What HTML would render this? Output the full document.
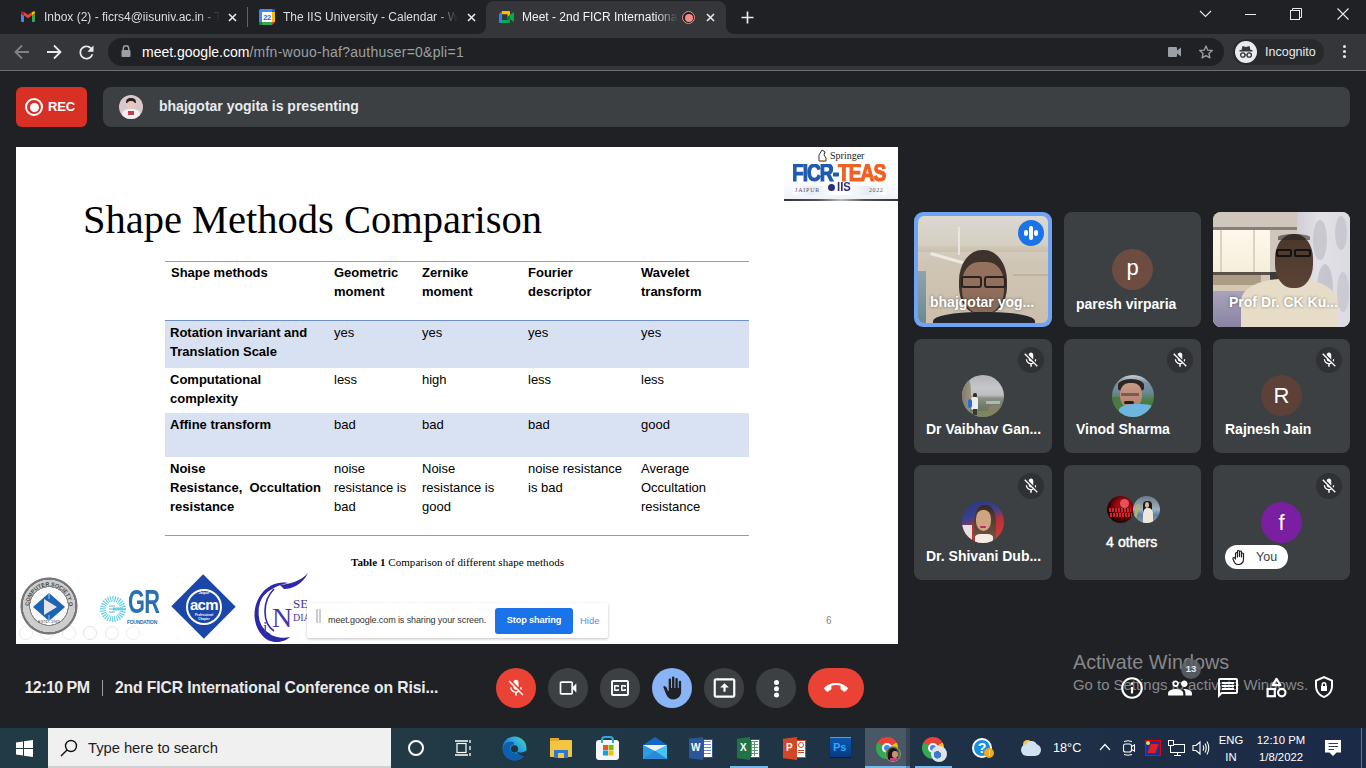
<!DOCTYPE html>
<html><head><meta charset="utf-8">
<style>
*{box-sizing:border-box;margin:0;padding:0}
html,body{width:1366px;height:768px;overflow:hidden;background:#202124;font-family:"Liberation Sans",sans-serif}
.a{position:absolute}
svg{display:block}
.tt{position:absolute;white-space:nowrap;overflow:hidden;font-size:12px;line-height:14px}
.fade{-webkit-mask-image:linear-gradient(to right,#000 0,#000 calc(100% - 22px),transparent 100%);mask-image:linear-gradient(to right,#000 0,#000 calc(100% - 22px),transparent 100%)}
.sl{position:absolute;white-space:nowrap;font-size:13px;line-height:19px;color:#000}
.slb{font-weight:bold}
.tile{position:absolute;background:#3c4043;border-radius:8px;overflow:hidden}
.nm{position:absolute;white-space:nowrap;color:#fff;font-weight:bold;font-size:14px;line-height:16px}
.mute{position:absolute;width:26px;height:26px;border-radius:13px;background:#2f3134}
.av{position:absolute;border-radius:50%;overflow:hidden}
.btn{position:absolute;top:668px;width:40px;height:40px;border-radius:20px;background:#3c4043}
.tb{position:absolute;top:736px}
</style></head><body>
<!-- ============ TAB STRIP ============ -->
<div class="a" style="left:0;top:0;width:1366px;height:34px;background:#202124"></div>

<!-- tab 1 gmail -->
<svg class="a" style="left:20px;top:11px" width="16" height="11" viewBox="0 0 16 12" preserveAspectRatio="none">
<path d="M1 3 L1 11 Q1 12 2 12 L4 12 L4 5 Z" fill="#4285f4"/>
<path d="M12 5 L12 12 L14 12 Q15 12 15 11 L15 3 Z" fill="#34a853"/>
<path d="M12 1 L12 5 L15 2.5 L15 1.5 Q15 0 13.5 0.5 Z" fill="#fbbc04"/>
<path d="M4 5 L4 1 L8 4 L12 1 L12 5 L8 8 Z" fill="#ea4335"/>
<path d="M1 2.5 L1 1.5 Q1 0 2.5 0.5 L4 1 L4 5 Z" fill="#c5221f"/>
</svg>
<div class="tt fade" style="left:44px;top:10px;width:176px;color:#dadce0">Inbox (2) - ficrs4@iisuniv.ac.in - The IIS</div>
<svg class="a" style="left:228px;top:13px" width="9" height="9" viewBox="0 0 9 9"><path d="M1 1L8 8M8 1L1 8" stroke="#e8eaed" stroke-width="1.6"/></svg>
<div class="a" style="left:247px;top:7px;width:1px;height:20px;background:#5f6368"></div>

<!-- tab 2 calendar -->
<svg class="a" style="left:259px;top:9px" width="16" height="16" viewBox="0 0 16 16">
<path d="M0 13V1.5Q0 0 1.5 0H14.5Q16 0 16 1.5V3H3V13Z" fill="#4285f4"/>
<path d="M13 0H14.5Q16 0 16 1.5V3H13Z" fill="#1967d2"/>
<rect x="13" y="3" width="3" height="10" fill="#fbbc04"/>
<path d="M0 13H13V16H1.5Q0 16 0 14.5Z" fill="#34a853"/>
<path d="M0 13H3V16H1.5Q0 16 0 14.5Z" fill="#188038"/>
<path d="M13 13H16L13 16Z" fill="#ea4335"/>
<rect x="3" y="3" width="10" height="10" fill="#fff"/>
<text x="8" y="11" font-size="7.5" font-weight="bold" text-anchor="middle" fill="#1a66d6" font-family="Liberation Sans" letter-spacing="-0.5">22</text>
</svg>
<div class="tt fade" style="left:283px;top:10px;width:175px;color:#dadce0">The IIS University - Calendar - Week</div>
<svg class="a" style="left:467px;top:13px" width="9" height="9" viewBox="0 0 9 9"><path d="M1 1L8 8M8 1L1 8" stroke="#e8eaed" stroke-width="1.6"/></svg>

<!-- active tab -->
<div class="a" style="left:486px;top:1px;width:240px;height:33px;background:#35363a;border-radius:8px 8px 0 0"></div>
<svg class="a" style="left:478px;top:26px" width="8" height="8" viewBox="0 0 8 8"><path d="M8 0 A8 8 0 0 1 0 8 H8 Z" fill="#35363a"/></svg>
<svg class="a" style="left:726px;top:26px" width="8" height="8" viewBox="0 0 8 8"><path d="M0 0 A8 8 0 0 0 8 8 H0 Z" fill="#35363a"/></svg>
<svg class="a" style="left:499px;top:11px" width="15" height="12" viewBox="0 0 15 12">
<path d="M0 3L3 0V3Z" fill="#ea4335"/>
<path d="M3 0H10.5Q11 0 11 0.5V3.8L8.6 6.2V3.3H3Z" fill="#fbbc04"/>
<path d="M0 3H3V12H1Q0 12 0 11Z" fill="#2684fc"/>
<path d="M3 9H8.6V6.2L11 3.8V11.5Q11 12 10.5 12H3Z" fill="#00ac47"/>
<path d="M8.6 6.2L11 3.8V8.4L8.6 9Z" fill="#00832d"/>
<path d="M11 3.8L15 1V11L11 8.2Z" fill="#00ac47"/>
</svg>
<div class="tt fade" style="left:522px;top:10px;width:156px;color:#f1f3f4">Meet - 2nd FICR International Conference</div>
<div class="a" style="left:682px;top:11px;width:13px;height:13px;border-radius:50%;border:1.5px solid #f28b82;background:#202124"></div>
<div class="a" style="left:684.5px;top:13.5px;width:8px;height:8px;border-radius:50%;background:#f28b82"></div>
<svg class="a" style="left:706px;top:13px" width="9" height="9" viewBox="0 0 9 9"><path d="M1 1L8 8M8 1L1 8" stroke="#e8eaed" stroke-width="1.6"/></svg>
<svg class="a" style="left:741px;top:11px" width="13" height="13" viewBox="0 0 13 13"><path d="M6.5 0.5V12.5M0.5 6.5H12.5" stroke="#e8eaed" stroke-width="1.7"/></svg>

<!-- window controls -->
<svg class="a" style="left:1199px;top:10px" width="13" height="8" viewBox="0 0 13 8"><path d="M1 1L6.5 6.5L12 1" stroke="#e8eaed" stroke-width="1.1" fill="none"/></svg>
<div class="a" style="left:1245px;top:14px;width:11px;height:1px;background:#e8eaed"></div>
<svg class="a" style="left:1290px;top:8px" width="12" height="12" viewBox="0 0 12 12"><rect x="0.5" y="2.5" width="9" height="9" stroke="#e8eaed" fill="none"/><path d="M2.5 2.5V0.5H11.5V9.5H9.5" stroke="#e8eaed" fill="none"/></svg>
<svg class="a" style="left:1337px;top:8px" width="12" height="12" viewBox="0 0 12 12"><path d="M0.5 0.5L11.5 11.5M11.5 0.5L0.5 11.5" stroke="#e8eaed" stroke-width="1.1"/></svg>

<!-- ============ TOOLBAR ============ -->
<div class="a" style="left:0;top:34px;width:1366px;height:36px;background:#35363a"></div>
<div class="a" style="left:0;top:70px;width:1366px;height:1px;background:#6b6e72"></div>
<svg class="a" style="left:14px;top:44px" width="16" height="16" viewBox="0 0 16 16"><path d="M15 8H2M8 1.5L1.5 8L8 14.5" stroke="#7f8185" stroke-width="1.8" fill="none"/></svg>
<svg class="a" style="left:46px;top:44px" width="16" height="16" viewBox="0 0 16 16"><path d="M1 8H14M8 1.5L14.5 8L8 14.5" stroke="#e8eaed" stroke-width="1.8" fill="none"/></svg>
<svg class="a" style="left:75.5px;top:41.5px" width="21" height="21" viewBox="0 0 24 24"><path d="M17.65 6.35C16.2 4.9 14.21 4 12 4c-4.42 0-7.99 3.58-7.99 8s3.57 8 7.99 8c3.73 0 6.84-2.55 7.73-6h-2.08c-.82 2.33-3.04 4-5.65 4-3.31 0-6-2.69-6-6s2.69-6 6-6c1.66 0 3.14.69 4.22 1.78L13 11h7V4l-2.35 2.35z" fill="#e8eaed"/></svg>
<div class="a" style="left:108px;top:38px;width:1116px;height:28px;border-radius:14px;background:#202124"></div>
<svg class="a" style="left:121px;top:45px" width="10" height="12" viewBox="0 0 10 12"><path d="M2.3 5V3.5A2.7 2.7 0 0 1 7.7 3.5V5" stroke="#9aa0a6" stroke-width="1.4" fill="none"/><rect x="0.5" y="5" width="9" height="7" rx="1" fill="#9aa0a6"/></svg>
<div class="a" style="left:142px;top:44px;font-size:14px;line-height:16px;white-space:nowrap;color:#fff">meet.google.com<span style="color:#9aa0a6;letter-spacing:0.25px">/mfn-wouo-haf?authuser=0&amp;pli=1</span></div>
<svg class="a" style="left:1168px;top:47px" width="13" height="10" viewBox="0 0 13 10"><rect x="0" y="0" width="9" height="10" rx="1" fill="#9aa0a6"/><path d="M9 3.5L13 0.5V9.5L9 6.5Z" fill="#9aa0a6"/></svg>
<svg class="a" style="left:1199px;top:45px" width="14" height="14" viewBox="0 0 14 14"><path d="M7 1L8.8 5.2L13.3 5.5L9.9 8.5L10.9 12.9L7 10.6L3.1 12.9L4.1 8.5L0.7 5.5L5.2 5.2Z" stroke="#9aa0a6" stroke-width="1.3" fill="none" stroke-linejoin="round"/></svg>
<div class="a" style="left:1233px;top:39px;width:91px;height:26px;border-radius:13px;background:#28292c"></div>
<div class="a" style="left:1235px;top:41px;width:22px;height:22px;border-radius:50%;background:#e8eaed"></div>
<svg class="a" style="left:1238px;top:45px" width="16" height="14" viewBox="0 0 16 14"><path d="M4.5 1L3.5 5H12.5L11.5 1L8 2Z" fill="#35363a"/><rect x="1.5" y="5" width="13" height="1.5" fill="#35363a"/><circle cx="4.8" cy="10" r="2.2" stroke="#35363a" stroke-width="1.3" fill="none"/><circle cx="11.2" cy="10" r="2.2" stroke="#35363a" stroke-width="1.3" fill="none"/><path d="M7 10H9" stroke="#35363a" stroke-width="1.2"/></svg>
<div class="a" style="left:1265px;top:45px;font-size:12.5px;line-height:14px;color:#e8eaed;white-space:nowrap">Incognito</div>
<div class="a" style="left:1343px;top:45px;width:3px;height:3px;border-radius:50%;background:#e8eaed;box-shadow:0 5px 0 #e8eaed,0 10px 0 #e8eaed"></div>

<!-- ============ MEET TOP ============ -->
<div class="a" style="left:16px;top:87px;width:71px;height:40px;border-radius:6px;background:#d93025"></div>
<div class="a" style="left:25px;top:98px;width:18px;height:18px;border-radius:50%;border:2px solid #fff"></div>
<div class="a" style="left:29.5px;top:102.5px;width:9px;height:9px;border-radius:50%;background:#fff"></div>
<div class="a" style="left:48px;top:99px;font-size:13px;line-height:15px;font-weight:bold;color:#fff;letter-spacing:-0.1px">REC</div>
<div class="a" style="left:103px;top:87px;width:1247px;height:40px;border-radius:8px;background:#3c4043"></div>
<div class="av" style="left:119px;top:95px;width:24px;height:24px;background:#d8c8cc">
 <div class="a" style="left:7px;top:3px;width:10px;height:5px;border-radius:5px 5px 1px 1px;background:#2a2022"></div>
 <div class="a" style="left:8px;top:6px;width:8px;height:8px;border-radius:45%;background:#e6c8bc"></div>
 <div class="a" style="left:3px;top:14px;width:18px;height:12px;border-radius:40% 40% 0 0;background:#f2eef2"></div>
 <div class="a" style="left:9px;top:16px;width:6px;height:4px;background:#c04050"></div>
</div>
<div class="a" style="left:159px;top:98px;font-size:14px;line-height:16px;font-weight:bold;color:#e8eaed;white-space:nowrap">bhajgotar yogita is presenting</div>

<!-- SLIDE -->
<div class="a" style="left:16px;top:147px;width:882px;height:497px;background:#fff;overflow:hidden">
 <div class="a" style="left:67px;top:50px;font-family:'Liberation Serif',serif;font-size:40.5px;line-height:46px;color:#000;white-space:nowrap">Shape Methods Comparison</div>
 <!-- FICR logo -->
 <div class="a" style="left:768px;top:0;width:114px;height:53px;background:linear-gradient(#fff 0,#fff 60%,#eef1f7 100%)"></div>
 <div class="a" style="left:768px;top:52px;width:114px;height:2px;background:linear-gradient(to right,#333 0,#555 30%,#bbb 50%,#555 70%,#333 100%)"></div>
 <svg class="a" style="left:801px;top:2px" width="10" height="13" viewBox="0 0 10 13"><path d="M2 12V6L5 1L8 3L7 6L9 9V12Z" stroke="#333" stroke-width="1" fill="none"/><rect x="2" y="11.5" width="7" height="1.2" fill="#e08030"/></svg>
 <div class="a" style="left:814px;top:3px;font-family:'Liberation Serif',serif;font-size:10px;line-height:12px;color:#222">Springer</div>
 <div class="a" style="left:777px;top:17px;width:94px;height:20px;overflow:hidden">
  <div style="position:absolute;left:-1px;top:-3px;font-weight:bold;font-size:22px;line-height:22px;letter-spacing:-1.2px;transform:scale(0.875,1.12);transform-origin:0 0;white-space:nowrap;font-family:'Liberation Sans',sans-serif;-webkit-text-stroke:1.1px"><span style="color:#1f5aae;-webkit-text-stroke-color:#1f5aae">FICR-</span><span style="color:#ee6226;-webkit-text-stroke-color:#ee6226">TEAS</span></div>
 </div>
 <div class="a" style="left:777px;top:39px;width:93px;height:9px;background:linear-gradient(to right,#fff,#e6ebf5 20%,#fff 45%,#fff 55%,#e6ebf5 80%,#fff)"></div>
 <div class="a" style="left:779px;top:39px;font-family:'Liberation Serif',serif;font-size:6px;line-height:8px;color:#556;letter-spacing:0.8px">JAIPUR</div>
 <div class="a" style="left:853px;top:39px;font-family:'Liberation Serif',serif;font-size:6px;line-height:8px;color:#556;letter-spacing:0.6px">2022</div>
 <div class="a" style="left:812px;top:37px;width:7px;height:7px;border-radius:50%;background:#2d2d7a"></div>
 <div class="a" style="left:821px;top:34px;font-weight:bold;font-size:12.5px;line-height:13px;color:#2d2d7a;transform:scaleX(0.9);transform-origin:0 0">IIS</div>

 <!-- table -->
 <div class="a" style="left:149px;top:114px;width:584px;height:1px;background:#7f9dd6"></div>
 <div class="a" style="left:149px;top:173px;width:584px;height:1px;background:#6d8fd0"></div>
 <div class="a" style="left:149px;top:174px;width:584px;height:47px;background:#d7e1f1"></div>
 <div class="a" style="left:149px;top:266px;width:584px;height:44px;background:#d9e2f2"></div>
 <div class="a" style="left:149px;top:388px;width:584px;height:1px;background:#7f9dd6"></div>

 <div class="sl slb" style="left:155px;top:116px">Shape methods</div>
 <div class="sl slb" style="left:318px;top:116px">Geometric<br>moment</div>
 <div class="sl slb" style="left:406px;top:116px">Zernike<br>moment</div>
 <div class="sl slb" style="left:512px;top:116px">Fourier<br>descriptor</div>
 <div class="sl slb" style="left:625px;top:116px">Wavelet<br>transform</div>

 <div class="sl slb" style="left:154px;top:176px">Rotation invariant and<br>Translation Scale</div>
 <div class="sl" style="left:318px;top:176px">yes</div>
 <div class="sl" style="left:406px;top:176px">yes</div>
 <div class="sl" style="left:512px;top:176px">yes</div>
 <div class="sl" style="left:625px;top:176px">yes</div>

 <div class="sl slb" style="left:154px;top:223px">Computational<br>complexity</div>
 <div class="sl" style="left:318px;top:223px">less</div>
 <div class="sl" style="left:406px;top:223px">high</div>
 <div class="sl" style="left:512px;top:223px">less</div>
 <div class="sl" style="left:625px;top:223px">less</div>

 <div class="sl slb" style="left:154px;top:268px">Affine transform</div>
 <div class="sl" style="left:318px;top:268px">bad</div>
 <div class="sl" style="left:406px;top:268px">bad</div>
 <div class="sl" style="left:512px;top:268px">bad</div>
 <div class="sl" style="left:625px;top:268px">good</div>

 <div class="sl slb" style="left:154px;top:312px">Noise<br>Resistance,&nbsp; Occultation<br>resistance</div>
 <div class="sl" style="left:318px;top:312px">noise<br>resistance is<br>bad</div>
 <div class="sl" style="left:406px;top:312px">Noise<br>resistance is<br>good</div>
 <div class="sl" style="left:512px;top:312px">noise resistance<br>is bad</div>
 <div class="sl" style="left:625px;top:312px">Average<br>Occultation<br>resistance</div>

 <div class="a" style="left:335px;top:409px;font-family:'Liberation Serif',serif;font-size:11px;line-height:12px;color:#000;white-space:nowrap;letter-spacing:0.05px"><b>Table 1</b> Comparison of different shape methods</div>
 <div class="a" style="left:810px;top:468px;font-size:10px;line-height:12px;color:#888">6</div>

 <!-- logos -->
 <!-- faint toolbar icons -->
 <div class="a" style="left:3px;top:479px;width:14px;height:14px;border-radius:50%;border:1px solid #eaeaea"></div>
 <div class="a" style="left:24px;top:479px;width:14px;height:14px;border-radius:50%;border:1px solid #eaeaea"></div>
 <div class="a" style="left:46px;top:479px;width:14px;height:14px;border-radius:50%;border:1px solid #eaeaea"></div>
 <div class="a" style="left:67px;top:479px;width:14px;height:14px;border-radius:50%;border:1px solid #e4e4e4"></div>
 <div class="a" style="left:89px;top:479px;width:14px;height:14px;border-radius:50%;border:1px solid #e8e8e8"></div>
 <div class="a" style="left:110px;top:479px;width:14px;height:14px;border-radius:50%;border:1px solid #eeeeee"></div>

 <!-- CSI -->
 <div class="a" style="left:4px;top:430px;width:58px;height:58px;border-radius:50%;background:radial-gradient(circle closest-side,#fafafa 0 64%,#8a8a8a 65% 68%,#cdcdcd 69% 90%,#777 91% 97%,rgba(255,255,255,0) 100%)"></div>
 <svg class="a" style="left:4px;top:430px" width="58" height="58" viewBox="0 0 58 58"><path id="arc1" d="M9 29 A20 20 0 0 1 49 29" fill="none"/><text font-family="Liberation Sans" font-size="5.5" font-weight="bold" fill="#444"><textPath href="#arc1">COMPUTER SOCIETY OF INDIA</textPath></text><text x="29" y="46" font-family="Liberation Sans" font-size="4" fill="#444" text-anchor="middle">ESTD. 1965</text></svg>
 <svg class="a" style="left:17px;top:446px" width="32" height="28" viewBox="0 0 32 28"><path d="M16 0L32 14L16 28L0 14Z" fill="#1d63b3"/><path d="M11 6L24 14L11 22Z" fill="#e4e4e4"/><path d="M16 0V6M16 22V28" stroke="#cfe0f5" stroke-width="0.8"/></svg>
 <!-- GR -->
 <svg class="a" style="left:84px;top:441px" width="26" height="42" viewBox="0 0 26 42"><circle cx="13" cy="21" r="10" stroke="#6fd0e2" stroke-width="6" stroke-dasharray="1.2 1" fill="none"/><path d="M23 21H13" stroke="#6fd0e2" stroke-width="3"/><path d="M9 18H15M9 21H15M9 24H15" stroke="#5fb8d8" stroke-width="1"/></svg>
 <div class="a" style="left:112px;top:438px;font-weight:bold;font-size:33px;line-height:34px;color:#2a70b4;letter-spacing:-1px;transform:scaleX(0.66);transform-origin:0 0">GR</div>
 <div class="a" style="left:111px;top:472px;font-size:5px;line-height:6px;color:#2a70b4;letter-spacing:-0.3px;font-weight:bold">FOUNDATION</div>
 <!-- ACM -->
 <div class="a" style="left:164px;top:437px;width:47px;height:45px;background:#1b48a8;transform:rotate(45deg) scale(0.98,1)"></div>
 <div class="a" style="left:170px;top:442px;width:36px;height:36px;border-radius:50%;border:2px solid #fff"></div>
 <div class="a" style="left:171px;top:449px;width:34px;text-align:center;font-weight:bold;font-size:15px;line-height:17px;color:#fff;letter-spacing:-0.6px">acm</div>
 <div class="a" style="left:171px;top:444px;width:34px;text-align:center;font-weight:bold;font-size:3.5px;line-height:4px;color:#fff">Jaipur</div>
 <div class="a" style="left:171px;top:466px;width:34px;text-align:center;font-weight:bold;font-size:3px;line-height:4px;color:#fff">Professional<br>Chapter</div>
 <!-- inseed -->
 <svg class="a" style="left:230px;top:426px" width="80" height="72" viewBox="0 0 80 72"><path d="M26 12 C6 22 2 52 20 66 C30 72 40 68 44 64 C28 68 10 56 11 38 C12 24 24 14 42 10 C36 9 31 10 26 12Z" fill="#2c2aa8"/><path d="M20 18 C8 30 8 54 24 62" stroke="#2c2aa8" stroke-width="2.2" fill="none"/><path d="M28 16 C16 28 16 50 28 58" stroke="#2c2aa8" stroke-width="1.6" fill="none"/><path d="M34 12 C50 10 56 6 62 0 C56 12 46 16 38 16Z" fill="#2c2aa8"/><text x="26" y="54" font-family="Liberation Serif" font-size="28" fill="#4838a4">N</text><text x="17" y="60" font-family="Liberation Serif" font-size="16" fill="#4838a4">i</text><text x="47" y="35" font-family="Liberation Serif" font-size="13" fill="#4838a4">SE</text><text x="47" y="48" font-family="Liberation Serif" font-size="10" fill="#4838a4">DIA</text></svg>
 <!-- sharing bar -->
 <div class="a" style="left:291px;top:456px;width:301px;height:35px;background:#fff;box-shadow:0 1px 3px rgba(0,0,0,0.25);border-radius:2px"></div>
 <div class="a" style="left:300px;top:462px;width:1.5px;height:14px;background:#ccc;box-shadow:3px 0 0 #ccc"></div>
 <div class="a" style="left:312px;top:468px;font-size:9px;line-height:11px;color:#333;white-space:nowrap;letter-spacing:-0.1px">meet.google.com is sharing your screen.</div>
 <div class="a" style="left:479px;top:461px;width:78px;height:26px;border-radius:3px;background:#1a73e8"></div>
 <div class="a" style="left:479px;top:468px;width:78px;text-align:center;font-size:9.2px;line-height:11px;color:#fff;font-weight:bold;letter-spacing:-0.15px">Stop sharing</div>
 <div class="a" style="left:564px;top:468px;font-size:9.5px;line-height:11px;color:#5b8de0">Hide</div>
</div>

<!-- TILES -->
<!-- tile 1: bhajgotar (video, active speaker) -->
<div class="tile" style="left:914px;top:212px;width:138px;height:115px;border-radius:9px;background:#6ea4f6">
 <div class="a" style="left:4px;top:4px;width:130px;height:107px;border-radius:6px;overflow:hidden;background:linear-gradient(#dcd8d0 0,#d6d0c4 25%,#cfc5b4 45%,#cbbfac 100%)">
  <div class="a" style="left:0;top:30px;width:130px;height:6px;background:linear-gradient(#d2c8b8,#cabfae)"></div>
  <div class="a" style="left:95px;top:58px;width:35px;height:2px;background:#bfb29e"></div>
  <div class="a" style="left:0;top:55px;width:8px;height:52px;background:linear-gradient(#8ea4ae,#6d8894)"></div>
  <div class="a" style="left:40px;top:11px;width:1.5px;height:28px;background:#ebe7e0"></div>
  <div class="a" style="left:13px;top:36px;width:34px;height:2.5px;background:#ece9e2;transform:rotate(16deg);transform-origin:0 0"></div>
  <div class="a" style="left:41px;top:34px;width:48px;height:64px;border-radius:48% 48% 42% 42%;background:#3e322c"></div>
  <div class="a" style="left:44px;top:46px;width:42px;height:52px;border-radius:40% 40% 46% 46%;background:linear-gradient(#94725e,#8a6a58)"></div>
  <div class="a" style="left:43px;top:60px;width:21px;height:12px;border:2.5px solid #2a2220;border-radius:3px"></div>
  <div class="a" style="left:66px;top:60px;width:22px;height:12px;border:2.5px solid #2a2220;border-radius:3px"></div>
  <div class="a" style="left:15px;top:96px;width:102px;height:20px;border-radius:45% 45% 0 0;background:#26272b"></div>
 </div>
 <div class="a" style="left:104px;top:8px;width:26px;height:26px;border-radius:50%;background:#1a73e8"></div>
 <div class="a" style="left:110px;top:18px;width:4px;height:6px;border-radius:2px;background:#fff"></div>
 <div class="a" style="left:115px;top:14px;width:4px;height:14px;border-radius:2px;background:#fff"></div>
 <div class="a" style="left:120px;top:18px;width:4px;height:6px;border-radius:2px;background:#fff"></div>
 <div class="nm" style="left:16px;top:82px;text-shadow:0 0 3px rgba(0,0,0,0.5)">bhajgotar yog...</div>
</div>
<!-- tile 2: paresh -->
<div class="tile" style="left:1064px;top:212px;width:137px;height:115px">
 <div class="av" style="left:48px;top:37px;width:41px;height:41px;background:#6d4c41;color:#fff;font-size:22px;line-height:38px;text-align:center">p</div>
 <div class="nm" style="left:12px;top:84px">paresh virparia</div>
</div>
<!-- tile 3: prof CK (video) -->
<div class="tile" style="left:1213px;top:212px;width:137px;height:115px;background:#c9c6c4">
 <div class="a" style="left:0;top:0;width:84px;height:115px;background:#cfc7bb"></div>
 <div class="a" style="left:84px;top:0;width:53px;height:115px;background:linear-gradient(to right,#d0ced4,#e2e1e6 40%,#dcdbe2 100%)"></div>
 <div class="a" style="left:100px;top:8px;width:14px;height:40px;border-radius:50%;background:rgba(140,140,155,0.28)"></div>
 <div class="a" style="left:122px;top:4px;width:12px;height:34px;border-radius:50%;background:rgba(140,140,155,0.25)"></div>
 <div class="a" style="left:104px;top:52px;width:16px;height:50px;border-radius:50%;background:rgba(140,140,155,0.3)"></div>
 <div class="a" style="left:124px;top:60px;width:12px;height:40px;border-radius:50%;background:rgba(140,140,155,0.22)"></div>
 <div class="a" style="left:0;top:15px;width:84px;height:3px;background:#8a7f78"></div>
 <div class="a" style="left:0;top:18px;width:57px;height:43px;background:linear-gradient(#fdf8ec,#f6eedb)"></div>
 <div class="a" style="left:7px;top:18px;width:2px;height:43px;background:#dcd2bf"></div>
 <div class="a" style="left:40px;top:18px;width:2px;height:43px;background:#dcd2bf"></div>
 <div class="a" style="left:0;top:60px;width:57px;height:3px;background:#5a5048"></div>
 <div class="a" style="left:57px;top:60px;width:30px;height:16px;background:#3e3a36"></div>
 <div class="a" style="left:0;top:63px;width:48px;height:12px;background:#ab9c86"></div>
 <div class="a" style="left:0;top:73px;width:45px;height:6px;background:#d4c8b4"></div>
 <div class="a" style="left:0;top:79px;width:45px;height:36px;background:linear-gradient(#a8a4bc,#8a82a4)"></div>
 <div class="a" style="left:28px;top:67px;width:96px;height:52px;border-radius:42% 42% 0 0;background:#e6dcc8"></div>
 <div class="a" style="left:62px;top:22px;width:38px;height:54px;border-radius:46% 46% 44% 44%;background:linear-gradient(#4a362c,#5a4436)"></div>
 <div class="a" style="left:65px;top:22px;width:32px;height:6px;border-radius:50% 50% 0 0;background:#2a2220;opacity:0.55"></div>
 <div class="a" style="left:63px;top:37px;width:16px;height:8px;border:2px solid #141210;border-radius:2px"></div>
 <div class="a" style="left:81px;top:37px;width:17px;height:8px;border:2px solid #141210;border-radius:2px"></div>
 <div class="nm" style="left:16px;top:82px;text-shadow:0 0 3px rgba(0,0,0,0.45)">Prof Dr. CK Ku...</div>
</div>

<!-- row 2 -->
<div class="tile" style="left:914px;top:339px;width:138px;height:114px">
 <div class="mute" style="left:104px;top:8px"><svg style="position:absolute;left:4px;top:4px" width="18" height="18" viewBox="0 0 24 24"><path d="M19 11h-1.7c0 .74-.16 1.43-.43 2.05l1.23 1.23c.56-.98.9-2.09.9-3.28zm-4.02.17c0-.06.02-.11.02-.17V5c0-1.66-1.34-3-3-3S9 3.34 9 5v.18l5.98 5.99zM4.27 3L3 4.27l6.01 6.01V11c0 1.66 1.33 3 2.99 3 .22 0 .44-.03.65-.08l1.66 1.66c-.71.33-1.5.52-2.31.52-2.76 0-5.3-2.1-5.3-5.1H5c0 3.41 2.72 6.23 6 6.72V21h2v-3.28c.91-.13 1.77-.45 2.54-.9L19.73 21 21 19.73 4.27 3z" fill="#fff"/></svg></div>
 <div class="av" style="left:48px;top:36px;width:42px;height:42px;background:linear-gradient(#b4b4b8 0,#c6c6ca 30%,#bcbec0 48%,#8a9088 55%,#6e7c68 75%,#68705a 100%)">
  <div class="a" style="left:24px;top:26px;width:14px;height:3px;background:#c8ccc8;opacity:0.7"></div>
  <div class="a" style="left:-2px;top:2px;width:11px;height:36px;border-radius:0 40% 30% 0;background:linear-gradient(to right,#7a7666,#9a9482)"></div>
  <div class="a" style="left:26px;top:30px;width:18px;height:10px;border-radius:40% 0 0 0;background:#8a7e66"></div>
  <div class="a" style="left:0;top:36px;width:42px;height:6px;background:#7c8660"></div>
  <div class="a" style="left:11px;top:18px;width:4px;height:5px;border-radius:45%;background:#3a2a24"></div>
  <div class="a" style="left:9px;top:22px;width:7px;height:13px;border-radius:2px;background:#eceef0"></div>
  <div class="a" style="left:6px;top:24px;width:4px;height:9px;border-radius:2px;background:#2a6ed0"></div>
  <div class="a" style="left:11px;top:34px;width:4px;height:6px;background:#3a3a30"></div>
 </div>
 <div class="nm" style="left:12px;top:82px">Dr Vaibhav Gan...</div>
</div>
<div class="tile" style="left:1064px;top:339px;width:137px;height:114px">
 <div class="mute" style="left:103px;top:8px"><svg style="position:absolute;left:4px;top:4px" width="18" height="18" viewBox="0 0 24 24"><path d="M19 11h-1.7c0 .74-.16 1.43-.43 2.05l1.23 1.23c.56-.98.9-2.09.9-3.28zm-4.02.17c0-.06.02-.11.02-.17V5c0-1.66-1.34-3-3-3S9 3.34 9 5v.18l5.98 5.99zM4.27 3L3 4.27l6.01 6.01V11c0 1.66 1.33 3 2.99 3 .22 0 .44-.03.65-.08l1.66 1.66c-.71.33-1.5.52-2.31.52-2.76 0-5.3-2.1-5.3-5.1H5c0 3.41 2.72 6.23 6 6.72V21h2v-3.28c.91-.13 1.77-.45 2.54-.9L19.73 21 21 19.73 4.27 3z" fill="#fff"/></svg></div>
 <div class="av" style="left:48px;top:36px;width:42px;height:42px;background:linear-gradient(#c8d0d8 0,#7a94a6 18%,#6a8a96 40%,#4e7e48 60%,#3e6e34 100%)">
  <div class="a" style="left:0;top:22px;width:14px;height:20px;background:#4a7a40"></div>
  <div class="a" style="left:6px;top:4px;width:26px;height:12px;border-radius:50% 50% 20% 20%;background:#2e2622"></div>
  <div class="a" style="left:8px;top:8px;width:22px;height:25px;border-radius:40% 40% 45% 45%;background:linear-gradient(#c89a84,#b08070)"></div>
  <div class="a" style="left:9px;top:18px;width:18px;height:3px;background:rgba(40,30,30,0.45)"></div>
  <div class="a" style="left:12px;top:26px;width:10px;height:3px;border-radius:2px;background:#2a1e1a"></div>
  <div class="a" style="left:7px;top:29px;width:38px;height:16px;border-radius:40% 40% 0 0;background:#6cb6e0"></div>
 </div>
 <div class="nm" style="left:12px;top:82px">Vinod Sharma</div>
</div>
<div class="tile" style="left:1213px;top:339px;width:137px;height:114px">
 <div class="mute" style="left:103px;top:8px"><svg style="position:absolute;left:4px;top:4px" width="18" height="18" viewBox="0 0 24 24"><path d="M19 11h-1.7c0 .74-.16 1.43-.43 2.05l1.23 1.23c.56-.98.9-2.09.9-3.28zm-4.02.17c0-.06.02-.11.02-.17V5c0-1.66-1.34-3-3-3S9 3.34 9 5v.18l5.98 5.99zM4.27 3L3 4.27l6.01 6.01V11c0 1.66 1.33 3 2.99 3 .22 0 .44-.03.65-.08l1.66 1.66c-.71.33-1.5.52-2.31.52-2.76 0-5.3-2.1-5.3-5.1H5c0 3.41 2.72 6.23 6 6.72V21h2v-3.28c.91-.13 1.77-.45 2.54-.9L19.73 21 21 19.73 4.27 3z" fill="#fff"/></svg></div>
 <div class="av" style="left:48px;top:36px;width:41px;height:41px;background:#5d4037;color:#fff;font-size:22px;line-height:41px;text-align:center">R</div>
 <div class="nm" style="left:12px;top:82px">Rajnesh Jain</div>
</div>

<!-- row 3 -->
<div class="tile" style="left:914px;top:465px;width:138px;height:115px">
 <div class="mute" style="left:104px;top:8px"><svg style="position:absolute;left:4px;top:4px" width="18" height="18" viewBox="0 0 24 24"><path d="M19 11h-1.7c0 .74-.16 1.43-.43 2.05l1.23 1.23c.56-.98.9-2.09.9-3.28zm-4.02.17c0-.06.02-.11.02-.17V5c0-1.66-1.34-3-3-3S9 3.34 9 5v.18l5.98 5.99zM4.27 3L3 4.27l6.01 6.01V11c0 1.66 1.33 3 2.99 3 .22 0 .44-.03.65-.08l1.66 1.66c-.71.33-1.5.52-2.31.52-2.76 0-5.3-2.1-5.3-5.1H5c0 3.41 2.72 6.23 6 6.72V21h2v-3.28c.91-.13 1.77-.45 2.54-.9L19.73 21 21 19.73 4.27 3z" fill="#fff"/></svg></div>
 <div class="av" style="left:48px;top:36px;width:42px;height:42px;background:linear-gradient(160deg,#2a3480 0,#3a4290 35%,#b8303a 55%,#d8402e 100%)">
  <div class="a" style="left:0;top:24px;width:10px;height:18px;background:#e8e0e0"></div>
  <div class="a" style="left:12px;top:4px;width:22px;height:38px;border-radius:45% 45% 20% 20%;background:linear-gradient(#3a2a22,#7a5a48)"></div>
  <div class="a" style="left:14px;top:9px;width:15px;height:21px;border-radius:42% 42% 48% 48%;background:#d0a482"></div>
  <div class="a" style="left:18px;top:25px;width:6px;height:2px;border-radius:1px;background:#c02a6a"></div>
  <div class="a" style="left:13px;top:33px;width:18px;height:10px;border-radius:30% 30% 0 0;background:#f4ece4"></div>
 </div>
 <div class="nm" style="left:12px;top:83px">Dr. Shivani Dub...</div>
</div>
<div class="tile" style="left:1064px;top:465px;width:137px;height:115px">
 <div class="av" style="left:43px;top:31px;width:27px;height:27px;background:radial-gradient(circle at 60% 40%,#a00812 0 30%,#3a0408 60%,#0e0204 80%)">
 <div class="a" style="left:13px;top:3px;width:9px;height:9px;border-radius:50%;background:#e8505a"></div>
 <div class="a" style="left:2px;top:12px;width:22px;height:4px;background:repeating-linear-gradient(to right,#d8202a 0 2px,#300 2px 3px)"></div>
 <div class="a" style="left:3px;top:17px;width:22px;height:4px;background:repeating-linear-gradient(to right,#d8202a 0 2px,#300 2px 3px)"></div>
</div>
 <div class="av" style="left:69px;top:31px;width:27px;height:27px;background:linear-gradient(#6a7a88 0,#9fb0c0 50%,#5c7ea8 70%,#8a9aa8 100%)">
 <div class="a" style="left:10px;top:5px;width:9px;height:20px;border-radius:4px 4px 2px 2px;background:#1e1a18"></div>
 <div class="a" style="left:10px;top:12px;width:10px;height:16px;border-radius:40% 40% 0 0;background:#eee8dc"></div>
 <div class="a" style="left:12px;top:6px;width:4px;height:6px;border-radius:45%;background:#d8b8a4"></div>
 <div class="a" style="left:2px;top:8px;width:3px;height:16px;background:#b8b060;transform:rotate(15deg)"></div>
</div>
 <div class="nm" style="left:42px;top:69px;font-size:14px;font-weight:normal;-webkit-text-stroke:0.45px #fff;letter-spacing:0.1px">4 others</div>
</div>
<div class="tile" style="left:1213px;top:465px;width:137px;height:115px">
 <div class="mute" style="left:103px;top:8px"><svg style="position:absolute;left:4px;top:4px" width="18" height="18" viewBox="0 0 24 24"><path d="M19 11h-1.7c0 .74-.16 1.43-.43 2.05l1.23 1.23c.56-.98.9-2.09.9-3.28zm-4.02.17c0-.06.02-.11.02-.17V5c0-1.66-1.34-3-3-3S9 3.34 9 5v.18l5.98 5.99zM4.27 3L3 4.27l6.01 6.01V11c0 1.66 1.33 3 2.99 3 .22 0 .44-.03.65-.08l1.66 1.66c-.71.33-1.5.52-2.31.52-2.76 0-5.3-2.1-5.3-5.1H5c0 3.41 2.72 6.23 6 6.72V21h2v-3.28c.91-.13 1.77-.45 2.54-.9L19.73 21 21 19.73 4.27 3z" fill="#fff"/></svg></div>
 <div class="av" style="left:48px;top:37px;width:41px;height:41px;background:#7b1fa2;color:#fff;font-size:22px;line-height:41px;text-align:center">f</div>
 <div class="a" style="left:12px;top:80px;width:63px;height:24px;border-radius:12px;background:#fff"></div>
 <svg class="a" style="left:19px;top:84px" width="14" height="16" viewBox="0 0 14 16"><path d="M3.5 9V4.5a1 1 0 0 1 2 0V8M5.5 7.5V2.5a1 1 0 0 1 2 0V7.5M7.5 7.5V3a1 1 0 0 1 2 0V8M9.5 8V5a1 1 0 0 1 2 0v5.5a5 5 0 0 1-5 5h-0.5a4 4 0 0 1-3.5-2L1 10a1 1 0 0 1 1.7-1L3.5 10" stroke="#202124" stroke-width="1.2" fill="none" stroke-linecap="round" stroke-linejoin="round"/></svg>
 <div class="a" style="left:43px;top:85px;font-size:12.5px;line-height:14px;color:#3c4043">You</div>
</div>

<!-- BOTTOM -->
<div class="a" style="left:24.5px;top:678.5px;font-size:16px;line-height:18px;font-weight:bold;color:#e8eaed;white-space:nowrap;letter-spacing:-0.55px">12:10 PM</div>
<div class="a" style="left:102px;top:680px;width:1px;height:16px;background:#9aa0a6"></div>
<div class="a" style="left:115px;top:678.5px;font-size:15.7px;line-height:18px;font-weight:bold;color:#e8eaed;white-space:nowrap;letter-spacing:-0.1px">2nd FICR International Conference on Risi...</div>

<div class="btn" style="left:496px;background:#ea4335">
 <svg style="position:absolute;left:10px;top:10px" width="20" height="20" viewBox="0 0 24 24"><path d="M19 11h-1.7c0 .74-.16 1.43-.43 2.05l1.23 1.23c.56-.98.9-2.09.9-3.28zm-4.02.17c0-.06.02-.11.02-.17V5c0-1.66-1.34-3-3-3S9 3.34 9 5v.18l5.98 5.99zM4.27 3L3 4.27l6.01 6.01V11c0 1.66 1.33 3 2.99 3 .22 0 .44-.03.65-.08l1.66 1.66c-.71.33-1.5.52-2.31.52-2.76 0-5.3-2.1-5.3-5.1H5c0 3.41 2.72 6.23 6 6.72V21h2v-3.28c.91-.13 1.77-.45 2.54-.9L19.73 21 21 19.73 4.27 3z" fill="#fff"/></svg>
</div>
<div class="btn" style="left:548px">
 <svg style="position:absolute;left:10px;top:10px" width="20" height="20" viewBox="0 0 24 24"><path d="M18 10.48V6c0-1.1-.9-2-2-2H4c-1.1 0-2 .9-2 2v12c0 1.1.9 2 2 2h12c1.1 0 2-.9 2-2v-4.48l4 3.98v-11l-4 3.98zm-2-.79V18H4V6h12v3.69z" fill="#fff"/></svg>
</div>
<div class="btn" style="left:600px">
 <svg style="position:absolute;left:8px;top:8px" width="24" height="24" viewBox="0 0 24 24"><path d="M19 4H5c-1.11 0-2 .9-2 2v12c0 1.1.89 2 2 2h14c1.1 0 2-.9 2-2V6c0-1.1-.9-2-2-2zm0 14H5V6h14v12zM7 15h3c.55 0 1-.45 1-1v-1H9.5v.5h-2v-3h2v.5H11v-1c0-.55-.45-1-1-1H7c-.55 0-1 .45-1 1v4c0 .55.45 1 1 1zm7 0h3c.55 0 1-.45 1-1v-1h-1.5v.5h-2v-3h2v.5H18v-1c0-.55-.45-1-1-1h-3c-.55 0-1 .45-1 1v4c0 .55.45 1 1 1z" fill="#fff"/></svg>
</div>
<div class="btn" style="left:652px;background:#8ab4f8">
 <svg style="position:absolute;left:9px;top:8px" width="23" height="24" viewBox="0 0 24 24"><path d="M13 24c-3.26 0-6.19-1.99-7.4-5.02l-3.03-7.61C2.26 10.58 3 9.79 3.81 10.05l.79.26c.56.18 1.02.61 1.24 1.16L7.25 15H8V3.25C8 2.56 8.56 2 9.25 2s1.25.56 1.25 1.25V12h1V1.25C11.5.56 12.06 0 12.75 0S14 .56 14 1.25V12h1V2.75c0-.69.56-1.25 1.25-1.25s1.25.56 1.25 1.25V12h1V5.75c0-.69.56-1.25 1.25-1.25S21 5.06 21 5.75V16c0 4.42-3.58 8-8 8z" fill="#202124"/></svg>
</div>
<div class="btn" style="left:704px">
 <svg style="position:absolute;left:6.5px;top:7px" width="27" height="26" viewBox="0 0 24 24"><path d="M20 3H4c-1.11 0-2 .89-2 2v14c0 1.11.89 2 2 2h16c1.1 0 2-.89 2-2V5c0-1.11-.9-2-2-2zm0 16.02H4V4.98h16v14.04z M12 7.5l-4 4h3v4h2v-4h3z" fill="#fff"/></svg>
</div>
<div class="btn" style="left:756px">
 <div class="a" style="left:17.5px;top:11.5px;width:5px;height:5px;border-radius:50%;background:#fff;box-shadow:0 6.3px 0 #fff,0 12.6px 0 #fff"></div>
</div>
<div class="a" style="left:808px;top:668px;width:56px;height:40px;border-radius:20px;background:#ea4335">
 <svg style="position:absolute;left:16px;top:8px" width="24" height="24" viewBox="0 0 24 24"><path d="M12 9c-1.6 0-3.15.25-4.6.72v3.1c0 .39-.23.74-.56.9-.98.49-1.87 1.12-2.66 1.85-.18.18-.43.28-.7.28-.28 0-.53-.11-.71-.29L.29 13.08c-.18-.17-.29-.42-.29-.7 0-.28.11-.53.29-.71C3.34 8.78 7.46 7 12 7s8.66 1.78 11.71 4.67c.18.18.29.43.29.71 0 .28-.11.53-.29.71l-2.48 2.48c-.18.18-.43.29-.71.29-.27 0-.52-.11-.7-.28-.79-.74-1.69-1.36-2.67-1.85-.33-.16-.56-.5-.56-.9v-3.1C15.15 9.25 13.6 9 12 9z" fill="#fff"/></svg>
</div>

<!-- right icons -->
<div class="a" style="left:1073px;top:651px;font-size:19.8px;line-height:22px;color:#86888b;white-space:nowrap">Activate Windows</div>
<div class="a" style="left:1073px;top:677px;font-size:14.9px;line-height:17px;color:#86888b;white-space:nowrap">Go to Settings to activate Windows.</div>
<svg class="a" style="left:1119px;top:675px" width="26" height="26" viewBox="0 0 24 24"><path d="M11 7h2v2h-2zm0 4h2v6h-2zm1-9C6.48 2 2 6.48 2 12s4.48 10 10 10 10-4.48 10-10S17.52 2 12 2zm0 18c-4.41 0-8-3.59-8-8s3.59-8 8-8 8 3.59 8 8-3.59 8-8 8z" fill="#fff"/></svg>
<svg class="a" style="left:1167px;top:675px" width="26" height="26" viewBox="0 0 24 24"><path d="M16 11c1.66 0 2.99-1.34 2.99-3S17.66 5 16 5c-1.66 0-3 1.34-3 3s1.34 3 3 3zm-8 0c1.66 0 2.99-1.34 2.99-3S9.66 5 8 5C6.34 5 5 6.34 5 8s1.34 3 3 3zm0 2c-2.33 0-7 1.17-7 3.5V19h14v-2.5c0-2.33-4.67-3.5-7-3.5zm8 0c-.29 0-.62.02-.97.05 1.16.84 1.97 1.97 1.97 3.45V19h6v-2.5c0-2.33-4.67-3.5-7-3.5z" fill="#fff"/><circle cx="8" cy="8" r="1.3" fill="#202124"/></svg>
<div class="a" style="left:1181px;top:659px;width:20px;height:20px;border-radius:50%;background:rgba(95,99,104,0.85);color:#e8eaed;font-size:9.5px;line-height:20px;text-align:center;font-weight:bold">13</div>
<svg class="a" style="left:1216px;top:676px" width="24" height="24" viewBox="0 0 24 24"><path d="M20 2H4c-1.1 0-1.99.9-1.99 2L2 22l4-4h14c1.1 0 2-.9 2-2V4c0-1.1-.9-2-2-2zm0 14H5.17L4 17.17V4h16v12zM6 12h12v2H6zm0-3h12v2H6zm0-3h12v2H6z" fill="#fff"/></svg>
<svg class="a" style="left:1266px;top:677px" width="21" height="21" viewBox="0 0 21 21"><path d="M10.5 1.8L6.6 8.2H14.4Z" stroke="#fff" stroke-width="2.2" fill="none" stroke-linejoin="round"/><rect x="1.6" y="12" width="7.2" height="7.2" stroke="#fff" stroke-width="2.2" fill="none"/><circle cx="15.8" cy="15.6" r="3.7" stroke="#fff" stroke-width="2.2" fill="none"/></svg>
<svg class="a" style="left:1312px;top:675px" width="24" height="24" viewBox="0 0 24 24"><path d="M12 1L3 5v6c0 5.55 3.84 10.74 9 12 5.16-1.26 9-6.45 9-12V5l-9-4zm7 10c0 4.52-2.98 8.69-7 9.93-4.02-1.24-7-5.41-7-9.93V6.3l7-3.11 7 3.11V11z M15 11h-.5V9.5a2.5 2.5 0 0 0-5 0V11H9v5h6zm-4-1.5a1 1 0 0 1 2 0V11h-2z" fill="#fff"/></svg>

<!-- TASKBAR -->
<div class="a" style="left:0;top:728px;width:1366px;height:40px;background:linear-gradient(to right,#203b45 0,#213a44 30%,#1f3146 70%,#1b2a47 100%)"></div>
<svg class="a" style="left:16px;top:740px" width="17" height="17" viewBox="0 0 17 17"><path d="M0 2.4L7 1.4V8H0ZM8 1.2L17 0V8H8ZM0 9H7V15.6L0 14.6ZM8 9H17V17L8 15.8Z" fill="#fff"/></svg>
<div class="a" style="left:48px;top:728px;width:343px;height:40px;background:#f0f0f0"></div>
<div class="a" style="left:48px;top:766px;width:343px;height:2px;background:#d0d0d0"></div>
<svg class="a" style="left:60px;top:739px" width="18" height="18" viewBox="0 0 18 18"><circle cx="11" cy="7" r="5.5" stroke="#111" stroke-width="1.4" fill="none"/><path d="M7 11L1 17" stroke="#111" stroke-width="1.5"/></svg>
<div class="a" style="left:88px;top:740px;font-size:14.8px;line-height:17px;color:#1e1e1e;white-space:nowrap;letter-spacing:-0.05px">Type here to search</div>
<div class="a" style="left:408px;top:740px;width:16px;height:16px;border-radius:50%;border:2px solid #fff"></div>
<svg class="a" style="left:455px;top:740px" width="18" height="16" viewBox="0 0 18 16"><rect x="2" y="3.5" width="9" height="9" stroke="#fff" stroke-width="1.2" fill="none"/><path d="M0 1H13M0 15H13M15 0V3M15 6V10M15 13V16" stroke="#fff" stroke-width="1.3"/></svg>
<!-- edge -->
<svg class="a" style="left:502px;top:736px" width="25" height="25" viewBox="0 0 25 25"><defs><linearGradient id="edg" x1="0" y1="1" x2="1" y2="0"><stop offset="0" stop-color="#0a4f9e"/><stop offset="0.45" stop-color="#1b8ad8"/><stop offset="0.75" stop-color="#35b8d8"/><stop offset="1" stop-color="#62d668"/></linearGradient></defs><circle cx="12.5" cy="12.5" r="12" fill="url(#edg)"/><path d="M12 8.5C9 8.5 7.5 11 8 13.5C8.6 16.5 12 18 15.5 17.5C18.5 17 21.5 16 24 15C23 20 19 24.5 12.5 24.5C6 24.5 1 19.5 1 13C1 11 2 9 3.5 7.5C5.5 5.5 9 5 12 6.5Z" fill="#0f5fae"/><circle cx="12.5" cy="12.8" r="3.6" fill="#1e3640"/><path d="M14 14.5C16 17 20 17.5 24 15C24.5 17 24 19 23 20.5C20 20 16 18.5 14 14.5Z" fill="#1e3640"/></svg>
<!-- explorer -->
<div class="a" style="left:550px;top:740px;width:22px;height:17px;background:#f4c542;border-radius:1px"></div>
<div class="a" style="left:550px;top:738px;width:9px;height:3px;background:#e0a82e"></div>
<div class="a" style="left:554px;top:750px;width:14px;height:8px;background:#2b7ad0"></div>
<div class="a" style="left:558px;top:753px;width:6px;height:5px;background:#f4c542"></div>
<!-- store -->
<div class="a" style="left:596px;top:740px;width:23px;height:20px;border-radius:3px;background:#f6f6f6"></div>
<div class="a" style="left:601px;top:736px;width:13px;height:7px;border:2px solid #2fa8e0;border-bottom:none;border-radius:4px 4px 0 0"></div>
<div class="a" style="left:603px;top:745px;width:4.5px;height:4.5px;background:#f25022;box-shadow:5.5px 0 0 #7fba00,0 5.5px 0 #00a4ef,5.5px 5.5px 0 #ffb900"></div>
<!-- mail -->
<svg class="a" style="left:643px;top:737px" width="24" height="22" viewBox="0 0 24 22"><path d="M0 8L12 0L24 8Z" fill="#1467c0"/><path d="M0 8H24V22H0Z" fill="#2b9be6"/><path d="M12 14L24 8V22Z" fill="#46c2f2"/><path d="M0 8H24L12 14Z" fill="#eef0f2"/><path d="M0 22L12 14L24 22Z" fill="#2a8ad8"/></svg>
<!-- word -->
<div class="a" style="left:703px;top:739px;width:10px;height:19px;background:#fff;border:1px solid #2b579a"></div>
<div class="a" style="left:704px;top:741px;width:7px;height:15px;background:repeating-linear-gradient(#6a8ac0 0 1px,#fff 1px 3px)"></div>
<div class="a" style="left:689px;top:737px;width:14px;height:23px;background:#2b579a;clip-path:polygon(0 8%,100% 0,100% 100%,0 92%)"></div>
<div class="a" style="left:691px;top:742px;font-weight:bold;font-size:10px;line-height:12px;color:#fff">W</div>
<!-- excel -->
<div class="a" style="left:750px;top:739px;width:10px;height:19px;background:#fff;border:1px solid #217346"></div>
<div class="a" style="left:751px;top:741px;width:7px;height:15px;background:repeating-linear-gradient(#5a9a70 0 1px,transparent 1px 3px),repeating-linear-gradient(to right,#5a9a70 0 1px,transparent 1px 3.5px)"></div>
<div class="a" style="left:737px;top:737px;width:13px;height:23px;background:#217346;clip-path:polygon(0 8%,100% 0,100% 100%,0 92%)"></div>
<div class="a" style="left:740px;top:742px;font-weight:bold;font-size:10px;line-height:12px;color:#fff">X</div>
<div class="a" style="left:730px;top:766px;width:38px;height:2px;background:#76b9ed"></div>
<!-- ppt -->
<div class="a" style="left:796px;top:740px;width:10px;height:18px;background:#fff;border:1px solid #d24726"></div>
<div class="a" style="left:798px;top:742px;width:6px;height:6px;border-radius:50%;border:1.5px solid #d24726"></div><div class="a" style="left:798px;top:750px;width:6px;height:4px;background:repeating-linear-gradient(#d24726 0 1px,#fff 1px 2px)"></div>
<div class="a" style="left:783px;top:737px;width:14px;height:23px;background:#d24726;clip-path:polygon(0 8%,100% 0,100% 100%,0 92%)"></div>
<div class="a" style="left:786px;top:742px;font-weight:bold;font-size:10px;line-height:12px;color:#fff">P</div>
<!-- ps -->
<div class="a" style="left:830px;top:737px;width:21px;height:20px;background:linear-gradient(#0a58b0,#073a80);border-top:1px solid #3aa8f0;box-shadow:0 1px 1px rgba(0,0,0,0.4)"></div>
<div class="a" style="left:833px;top:741px;font-weight:bold;font-size:11px;line-height:12px;color:#31a8ff">Ps</div>
<!-- chrome active -->
<div class="a" style="left:865px;top:728px;width:41px;height:40px;background:#4a5865"></div>
<div class="a" style="left:906px;top:728px;width:4px;height:40px;background:#36424f"></div>
<div class="a" style="left:906px;top:766px;width:4px;height:2px;background:#5a8ab8"></div>
<div class="a" style="left:865px;top:766px;width:41px;height:2px;background:#76b9ed"></div>
<div class="a" style="left:876px;top:737px;width:22px;height:22px;border-radius:50%;background:conic-gradient(from -60deg,#ea4335 0 120deg,#fbbc04 120deg 240deg,#34a853 240deg 360deg)"></div>
<div class="a" style="left:882px;top:743px;width:10px;height:10px;border-radius:50%;background:#4285f4;border:2px solid #fff"></div>
<div class="a" style="left:885px;top:746px;width:16px;height:16px;border-radius:50%;overflow:hidden;background:#4a6a40;border:1px solid #8a9a80"><div class="a" style="left:2px;top:1px;width:10px;height:14px;border-radius:45% 45% 10% 10%;background:#1e1412"></div><div class="a" style="left:6px;top:4px;width:6px;height:7px;border-radius:45%;background:#c89078"></div><div class="a" style="left:4px;top:11px;width:8px;height:4px;background:#d04080"></div></div>
<!-- chrome 2 -->
<div class="a" style="left:922px;top:737px;width:22px;height:22px;border-radius:50%;background:conic-gradient(from -60deg,#ea4335 0 120deg,#fbbc04 120deg 240deg,#34a853 240deg 360deg)"></div>
<div class="a" style="left:928px;top:743px;width:10px;height:10px;border-radius:50%;background:#4285f4;border:2px solid #fff"></div>
<div class="a" style="left:931px;top:746px;width:16px;height:16px;border-radius:50%;background:radial-gradient(circle at 40% 55%,#3a7ad0 0 28%,#e0e4ea 30% 80%,#a0a8b0 100%)"></div>
<div class="a" style="left:915px;top:766px;width:37px;height:2px;background:#76b9ed"></div>
<!-- help -->
<div class="a" style="left:972px;top:738px;width:20px;height:20px;border-radius:50%;background:#1a8fe0;border:2px solid #fff;color:#fff;font-weight:bold;font-size:14px;line-height:16px;text-align:center">?</div>
<div class="a" style="left:984px;top:748px;width:10px;height:10px;border-radius:50%;background:#f5a623"></div><div class="a" style="left:988.5px;top:750px;width:1.2px;height:6px;background:#fff"></div>
<!-- weather -->
<div class="a" style="left:1023px;top:740px;width:9px;height:9px;border-radius:50%;background:#f9c740"></div>
<div class="a" style="left:1021px;top:744px;width:20px;height:12px;border-radius:6px;background:#cfe2f3"></div>
<div class="a" style="left:1026px;top:741px;width:11px;height:10px;border-radius:50%;background:#cfe2f3"></div>
<div class="a" style="left:1053px;top:741px;font-size:12.7px;line-height:15px;color:#fff;white-space:nowrap">18°C</div>
<svg class="a" style="left:1099px;top:743px" width="12" height="8" viewBox="0 0 12 8"><path d="M1 7L6 1.5L11 7" stroke="#fff" stroke-width="1.2" fill="none"/></svg>
<svg class="a" style="left:1122px;top:740px" width="14" height="16" viewBox="0 0 14 16"><rect x="1.5" y="4" width="8" height="8" rx="2" stroke="#fff" stroke-width="1.1" fill="none"/><path d="M9.5 6.5L12.5 5V11L9.5 9.5" stroke="#fff" stroke-width="1.1" fill="none"/><path d="M2 1.5Q6 0 10 1.5M2 14.5Q6 16 10 14.5" stroke="#fff" stroke-width="1" fill="none"/></svg>
<div class="a" style="left:1145px;top:740px;width:16px;height:16px;background:#1a2fa0;border:1.5px solid #e00"></div>
<div class="a" style="left:1149px;top:744px;width:8px;height:9px;background:#e02020;transform:skewX(-20deg)"></div>
<div class="a" style="left:1146px;top:741px;width:4px;height:4px;border-radius:50%;background:#f0e040"></div>
<svg class="a" style="left:1168px;top:740px" width="18" height="17" viewBox="0 0 18 17"><rect x="2.5" y="4.5" width="14" height="8" stroke="#fff" fill="none"/><path d="M9.5 12.5V15.5M6 15.5H13" stroke="#fff"/><rect x="0.5" y="0.5" width="5" height="5" stroke="#fff" fill="#1d2f46"/></svg>
<svg class="a" style="left:1192px;top:740px" width="18" height="16" viewBox="0 0 18 16"><path d="M1 5.5H4L8 2V14L4 10.5H1Z" stroke="#fff" stroke-width="1.1" fill="none"/><path d="M11 5.5Q12.5 8 11 10.5M13 3.5Q15.5 8 13 12.5M15 1.5Q18.5 8 15 14.5" stroke="#fff" stroke-width="1.1" fill="none"/></svg>
<div class="a" style="left:1216px;top:732px;width:30px;text-align:center;font-size:11.3px;line-height:17px;color:#fff">ENG<br>IN</div>
<div class="a" style="left:1250px;top:732px;width:62px;text-align:center;font-size:11.3px;line-height:17px;color:#fff">12:10 PM<br>1/8/2022</div>
<svg class="a" style="left:1325px;top:740px" width="17" height="17" viewBox="0 0 17 17"><path d="M0 0H16V12.5H11.5L8 16L4.5 12.5H0Z" fill="#fff"/><path d="M3.5 3.5H13M3.5 6.5H13M3.5 9.5H9" stroke="#1b2a47" stroke-width="0.9"/></svg>
<div class="a" style="left:1361px;top:728px;width:1px;height:40px;background:#6a7488"></div>

</body></html>
